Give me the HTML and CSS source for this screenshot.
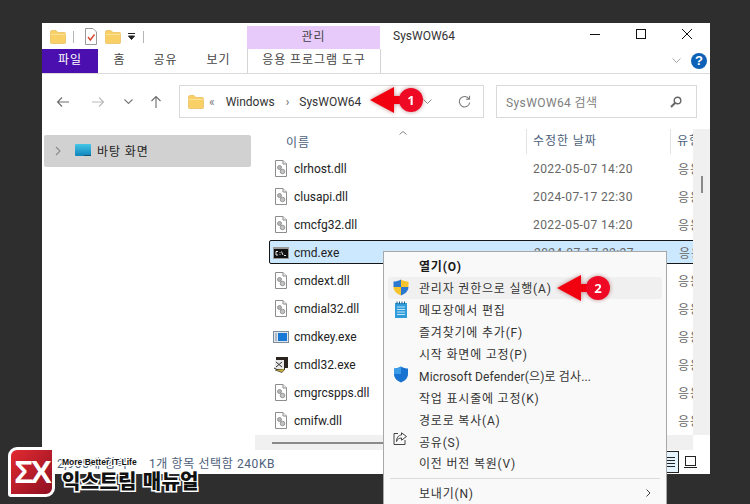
FILE: index.html
```html
<!DOCTYPE html>
<html lang="ko">
<head>
    <meta charset="UTF-8">
    <title>SysWOW64</title>
    <link rel="stylesheet" href="styles.css">
</head>
<body>
    <svg class="defs" width="0" height="0">
        <symbol id="folder" viewBox="0 0 16 14">
            <path d="M0.5 2 Q0.5 0.5 2 0.5 H6 L8 2.5 H14.5 Q15.5 2.5 15.5 3.5 V12.5 Q15.5 13.5 14.5 13.5 H1.5 Q0.5 13.5 0.5 12.5 Z" fill="#f8d066" stroke="#e6b548" stroke-width="0.6"/>
            <path d="M0.5 4.5 H15.5" stroke="#fbe29a" stroke-width="1"/>
        </symbol>
        <symbol id="dll" viewBox="0 0 14 17">
            <path d="M1.5 0.5 H9 L12.5 4 V16.5 H1.5 Z" fill="#fff" stroke="#8d8d8d"/>
            <path d="M9 0.5 V4 H12.5" fill="#eee" stroke="#8d8d8d"/>
            <circle cx="5.5" cy="7.5" r="2" fill="#b5b5b5" stroke="#7d7d7d" stroke-width="0.7"/>
            <circle cx="8.5" cy="11.5" r="2.3" fill="#c2c2c2" stroke="#7d7d7d" stroke-width="0.7"/>
        </symbol>
    </svg>

    <div class="window">
        <div class="titlebar">
            <div class="qat">
                <svg class="qat-folder" width="16" height="14"><use href="#folder"/></svg>
                <span class="qat-sep"></span>
                <svg class="qat-doc" width="12" height="17" viewBox="0 0 12 17">
                    <path d="M0.5 0.5 H8 L11.5 4 V16.5 H0.5 Z" fill="#fff" stroke="#9a9a9a"/>
                    <path d="M3 9 L5.3 12 L9.5 6.5" fill="none" stroke="#d8472b" stroke-width="1.4"/>
                </svg>
                <svg class="qat-folder2" width="16" height="14"><use href="#folder"/></svg>
                <svg class="qat-drop" width="7" height="7" viewBox="0 0 7 7">
                    <path d="M0 0.5 H7 M0.5 3 H6.5 L3.5 6.5 Z" fill="#222" stroke="#222"/>
                </svg>
                <span class="qat-sep qat-sep2"></span>
            </div>
            <div class="context-head">관리</div>
            <div class="win-title">SysWOW64</div>
            <div class="win-buttons">
                <svg width="12" height="12" viewBox="0 0 12 12"><path d="M1 6.5 H11" stroke="#111"/></svg>
                <svg width="12" height="12" viewBox="0 0 12 12"><rect x="1.5" y="1.5" width="9" height="9" fill="none" stroke="#111"/></svg>
                <svg width="12" height="12" viewBox="0 0 12 12"><path d="M1 1 L11 11 M11 1 L1 11" stroke="#111"/></svg>
            </div>
        </div>

        <div class="tabs">
            <div class="tab tab-file">파일</div>
            <div class="tab tab-home">홈</div>
            <div class="tab tab-share">공유</div>
            <div class="tab tab-view">보기</div>
            <div class="tab tab-tool">응용 프로그램 도구</div>
            <div class="tabs-right">
                <svg width="9" height="6" viewBox="0 0 9 6"><path d="M0.5 0.5 L4.5 4.5 L8.5 0.5" fill="none" stroke="#a8a8a8"/></svg>
                <span class="help">?</span>
            </div>
        </div>

        <div class="navbar">
            <div class="nav-buttons">
                <svg width="14" height="12" viewBox="0 0 14 12"><path d="M13 6 H1.5 M6 1.5 L1.5 6 L6 10.5" fill="none" stroke="#6d6d6d" stroke-width="1.1"/></svg>
                <svg class="nav-fwd" width="14" height="12" viewBox="0 0 14 12"><path d="M1 6 H12.5 M8 1.5 L12.5 6 L8 10.5" fill="none" stroke="#b9b9b9" stroke-width="1.1"/></svg>
                <svg class="nav-drop" width="9" height="6" viewBox="0 0 9 6"><path d="M0.5 0.5 L4.5 4.5 L8.5 0.5" fill="none" stroke="#7a7a7a" stroke-width="1.1"/></svg>
                <svg class="nav-up" width="12" height="14" viewBox="0 0 12 14"><path d="M6 13 V1.5 M1.5 6 L6 1.5 L10.5 6" fill="none" stroke="#6d6d6d" stroke-width="1.1"/></svg>
            </div>
            <div class="address">
                <svg width="16" height="14"><use href="#folder"/></svg>
                <span class="crumb-more">«</span>
                <span class="crumb">Windows</span>
                <span class="crumb-sep">›</span>
                <span class="crumb">SysWOW64</span>
                <svg class="addr-drop" width="9" height="6" viewBox="0 0 9 6"><path d="M0.5 0.5 L4.5 4.5 L8.5 0.5" fill="none" stroke="#8a8a8a"/></svg>
                <svg class="addr-refresh" width="13" height="13" viewBox="0 0 13 13"><path d="M11 4 A5.2 5.2 0 1 0 11.7 7.5 M11.5 0.8 V4.3 H8" fill="none" stroke="#7d7d7d" stroke-width="1.1"/></svg>
            </div>
            <div class="search">
                <span>SysWOW64 검색</span>
                <svg width="12" height="12" viewBox="0 0 12 12"><circle cx="7.5" cy="4.5" r="3.3" fill="none" stroke="#666" stroke-width="1.4"/><path d="M5 7 L1 11" stroke="#666" stroke-width="2"/></svg>
            </div>
        </div>

        <div class="main">
            <div class="sidebar">
                <div class="side-item">
                    <svg width="6" height="10" viewBox="0 0 6 10"><path d="M1 1 L5 5 L1 9" fill="none" stroke="#8a8a8a" stroke-width="1.1"/></svg>
                    <svg class="desk-icon" width="16" height="13" viewBox="0 0 16 13">
                        <defs><linearGradient id="desk" x1="0" y1="0" x2="0" y2="1"><stop offset="0" stop-color="#45c6e6"/><stop offset="1" stop-color="#0f83bd"/></linearGradient></defs>
                        <rect width="16" height="12" rx="1" fill="url(#desk)"/>
                        <path d="M9 11.5 H16" stroke="#16516e"/>
                    </svg>
                    <span>바탕 화면</span>
                </div>
            </div>

            <div class="content">
                <div class="content-top">
                    <div class="files">
                        <div class="file-head">
                            <div class="col-name">이름<svg class="sort" width="8" height="4" viewBox="0 0 8 4"><path d="M0.5 3.5 L4 0.5 L7.5 3.5" fill="none" stroke="#888"/></svg></div>
                            <div class="col-date">수정한 날짜</div>
                            <div class="col-type">유형</div>
                        </div>
                        <div class="file-row">
                            <div class="col-name"><svg width="14" height="17"><use href="#dll"/></svg>clrhost.dll</div>
                            <div class="col-date">2022-05-07 14:20</div>
                            <div class="col-type">응용 프로그램 확장</div>
                        </div>
                        <div class="file-row">
                            <div class="col-name"><svg width="14" height="17"><use href="#dll"/></svg>clusapi.dll</div>
                            <div class="col-date">2024-07-17 22:30</div>
                            <div class="col-type">응용 프로그램 확장</div>
                        </div>
                        <div class="file-row">
                            <div class="col-name"><svg width="14" height="17"><use href="#dll"/></svg>cmcfg32.dll</div>
                            <div class="col-date">2022-05-07 14:20</div>
                            <div class="col-type">응용 프로그램 확장</div>
                        </div>
                        <div class="file-row selected">
                            <div class="col-name">
                                <svg class="exe-icon" width="16" height="12" viewBox="0 0 16 12">
                                    <rect width="16" height="12" fill="#9a9a9a"/><rect x="1" y="2" width="14" height="9" fill="#111"/>
                                    <path d="M3 4.5 H5 M3 4.5 V8 H5 M7 5 V5.8 M7 7.2 V8 M8.5 4.5 L10 8 M11 8.5 H13" fill="none" stroke="#fff" stroke-width="0.9"/>
                                </svg>cmd.exe
                            </div>
                            <div class="col-date">2024-07-17 22:27</div>
                            <div class="col-type">응용 프로그램</div>
                        </div>
                        <div class="file-row">
                            <div class="col-name"><svg width="14" height="17"><use href="#dll"/></svg>cmdext.dll</div>
                            <div class="col-date">2022-05-07 14:20</div>
                            <div class="col-type">응용 프로그램 확장</div>
                        </div>
                        <div class="file-row">
                            <div class="col-name"><svg width="14" height="17"><use href="#dll"/></svg>cmdial32.dll</div>
                            <div class="col-date">2022-05-07 14:20</div>
                            <div class="col-type">응용 프로그램 확장</div>
                        </div>
                        <div class="file-row">
                            <div class="col-name">
                                <svg class="exe-icon" width="16" height="12" viewBox="0 0 16 12">
                                    <rect x="0.5" y="0.5" width="15" height="11" fill="#dfe6ee" stroke="#7f8c99"/>
                                    <rect x="5" y="2" width="9" height="8" fill="#1878d6"/>
                                    <path d="M2 3 H4 M2 5 H4 M2 7 H4 M2 9 H4" stroke="#7f8c99"/>
                                </svg>cmdkey.exe
                            </div>
                            <div class="col-date">2022-05-07 14:20</div>
                            <div class="col-type">응용 프로그램</div>
                        </div>
                        <div class="file-row">
                            <div class="col-name">
                                <svg class="exe-icon" width="16" height="16" viewBox="0 0 16 16">
                                    <path d="M3 0 H15 V11 H12 V13 H3 Z" fill="#2a2320"/>
                                    <rect x="2" y="3" width="9" height="9" fill="#e8e8e8"/>
                                    <path d="M3 5 L9 10 M9 5 L3 10 M1 11 L7 14" stroke="#333"/>
                                    <path d="M2 13 L9 15.5 L12 12" fill="#c8b23c" stroke="#333" stroke-width="0.7"/>
                                </svg>cmdl32.exe
                            </div>
                            <div class="col-date">2022-05-07 14:20</div>
                            <div class="col-type">응용 프로그램</div>
                        </div>
                        <div class="file-row">
                            <div class="col-name"><svg width="14" height="17"><use href="#dll"/></svg>cmgrcspps.dll</div>
                            <div class="col-date">2022-05-07 14:20</div>
                            <div class="col-type">응용 프로그램 확장</div>
                        </div>
                        <div class="file-row">
                            <div class="col-name"><svg width="14" height="17"><use href="#dll"/></svg>cmifw.dll</div>
                            <div class="col-date">2022-05-07 14:20</div>
                            <div class="col-type">응용 프로그램 확장</div>
                        </div>
                    </div>
                    <div class="vscroll"><span class="vthumb"></span></div>
                </div>
                <div class="hscroll"><span class="hthumb"></span></div>
            </div>
        </div>

        <div class="statusbar">
            <span class="status-count">2,905개 항목</span>
            <span class="status-sel">1개 항목 선택함 240KB</span>
            <div class="view-btns">
                <span class="view-btn on"><svg width="14" height="12" viewBox="0 0 14 12"><path d="M0 1.5 H14 M0 4.5 H14 M0 7.5 H14 M0 10.5 H14" stroke="#222"/></svg></span>
                <span class="view-btn"><svg width="13" height="12" viewBox="0 0 13 12"><rect x="1.5" y="0.5" width="10" height="9" fill="none" stroke="#222"/><path d="M0 11.5 H13" stroke="#222"/></svg></span>
            </div>
        </div>
    </div>

    <!-- context menu -->
    <div class="menu">
        <div class="menu-item strong">열기(O)</div>
        <div class="menu-item hover">
            <svg class="menu-icon" width="16" height="17" viewBox="0 0 16 17">
                <path d="M8 0.5 C10.5 2 13 2.5 15.5 2.5 V8 H8 Z" fill="#f5c32c"/>
                <path d="M8 0.5 C5.5 2 3 2.5 0.5 2.5 V8 H8 Z" fill="#2a78d0"/>
                <path d="M0.5 8 C0.5 12 4 15 8 16.5 V8 Z" fill="#f5c32c"/>
                <path d="M15.5 8 C15.5 12 12 15 8 16.5 V8 Z" fill="#2a78d0"/>
            </svg>관리자 권한으로 실행(A)
        </div>
        <div class="menu-item">
            <svg class="menu-icon" width="16" height="17" viewBox="0 0 16 17">
                <rect x="2" y="2" width="12" height="15" fill="#2f9bd8"/>
                <path d="M4 0.5 V3 M6.5 0.5 V3 M9 0.5 V3 M11.5 0.5 V3" stroke="#1d5f8c"/>
                <path d="M4 6 H12 M4 8.5 H12 M4 11 H12 M4 13.5 H12" stroke="#bfe6fa"/>
            </svg>메모장에서 편집
        </div>
        <div class="menu-item">즐겨찾기에 추가(F)</div>
        <div class="menu-item">시작 화면에 고정(P)</div>
        <div class="menu-item latin">
            <svg class="menu-icon" width="16" height="17" viewBox="0 0 16 17">
                <path d="M8 0.5 C10.5 2 13 2.5 15 2.5 V8 C15 12 12 15 8 16.5 C4 15 1 12 1 8 V2.5 C3 2.5 5.5 2 8 0.5 Z" fill="#1773cf"/>
                <path d="M8 0.5 C5.5 2 3 2.5 1 2.5 V8 H8 Z" fill="#3a9be8"/>
            </svg>Microsoft Defender(으)로 검사...
        </div>
        <div class="menu-item">작업 표시줄에 고정(K)</div>
        <div class="menu-item">경로로 복사(A)</div>
        <div class="menu-item">
            <svg class="menu-icon" width="14" height="13" viewBox="0 0 14 13">
                <path d="M5 1.5 H1 V12.5 H12 V8" fill="none" stroke="#444"/>
                <path d="M8.5 0.8 L13.5 4.5 L8.5 8.2 V6 C6 6 4.5 7 3.5 9.5 C3.5 6 5.5 3 8.5 3 Z" fill="none" stroke="#444"/>
            </svg>공유(S)
        </div>
        <div class="menu-item">이전 버전 복원(V)</div>
        <div class="menu-line"></div>
        <div class="menu-item">보내기(N)
            <svg class="menu-arrow" width="5" height="8" viewBox="0 0 5 8"><path d="M0.5 0.5 L4 4 L0.5 7.5" fill="none" stroke="#444"/></svg>
        </div>
    </div>

    <!-- red callouts -->
    <div class="callout callout-1"><span class="arrow"></span><span class="shaft"></span><span class="num">1</span></div>
    <div class="callout callout-2"><span class="arrow"></span><span class="shaft"></span><span class="num">2</span></div>

    <!-- watermark logo -->
    <div class="logo">
        <div class="logo-mark">ΣX</div>
        <div class="logo-text">
            <div class="logo-small">More Better IT Life</div>
            <div class="logo-big">익스트림 매뉴얼</div>
        </div>
    </div>
</body>
</html>
```

FILE: styles.css
```css
html, body {
    margin: 0;
    padding: 0;
}
body {
    position: relative;
    width: 750px;
    height: 504px;
    overflow: hidden;
    background: #2e2e2e;
    font-family: Roboto, "Noto Sans CJK KR", sans-serif;
    font-size: 12px;
    color: #333;
}
svg { display: block; flex: none; }
.defs { position: absolute; }

.window {
    display: flex;
    flex-direction: column;
    width: 668px;
    height: 451px;
    margin: 23px 0 0 42px;
    padding-top: 1px;
    box-sizing: border-box;
    background: #fff;
}

/* title bar */
.titlebar {
    display: flex;
    height: 25px;
    flex: none;
}
.qat {
    display: flex;
    align-items: center;
    width: 205px;
    padding-left: 8px;
    box-sizing: border-box;
}
.qat-sep { width: 1px; height: 12px; background: #b5b5b5; margin: 0 11px 0 7px; }
.qat-doc { margin-right: 8px; }
.qat-folder2 { margin-right: 7px; }
.qat-sep2 { margin-left: 8px; }
.context-head {
    width: 133px;
    height: 23px;
    margin-top: 2px;
    background: #e7caf9;
    text-align: center;
    line-height: 23px;
    color: #444;
    letter-spacing: 0.9px;
}
.win-title {
    flex: 1;
    padding: 2px 0 0 13px;
    line-height: 20px;
    color: #333;
}
.win-buttons {
    display: flex;
    gap: 34px;
    padding: 4px 17px 0 0;
}

/* ribbon tabs */
.tabs {
    display: flex;
    height: 24px;
    flex: none;
    border-bottom: 1px solid #dadada;
    line-height: 23px;
}
.tab { text-align: center; color: #444; letter-spacing: 0.9px; }
.tab-file { width: 56px; background: #4a0fae; color: #fff; }
.tab-home { width: 43px; }
.tab-share { width: 49px; }
.tab-view { width: 57px; }
.tab-tool {
    width: 132px;
    border-left: 1px solid #d4d4d4;
    border-right: 1px solid #d4d4d4;
}
.tabs-right {
    display: flex;
    flex: 1;
    align-items: center;
    justify-content: flex-end;
    gap: 10px;
    padding-right: 3px;
}
.help {
    width: 16px;
    height: 16px;
    border-radius: 50%;
    background: #0d62b8;
    color: #fff;
    font: bold 13px/16px "Liberation Sans", sans-serif;
    text-align: center;
}

/* address row */
.navbar {
    display: flex;
    align-items: center;
    height: 55px;
    flex: none;
    padding: 0 13px 0 14px;
    box-sizing: border-box;
}
.nav-buttons {
    display: flex;
    align-items: center;
    width: 123px;
}
.nav-fwd { margin-left: 21px; }
.nav-drop { margin-left: 19px; }
.nav-up { margin-left: 17px; }
.address, .search {
    display: flex;
    align-items: center;
    height: 33px;
    box-sizing: border-box;
    border: 1px solid #d9d9d9;
}
.address {
    width: 305px;
    padding: 0 12px 0 8px;
    color: #333;
}
.crumb-more { margin: 0 11px 0 5px; color: #777; }
.crumb-sep { margin: 0 10px 0 11px; color: #666; }
.addr-drop { margin-left: auto; }
.addr-refresh { margin-left: 26px; }
.search {
    justify-content: space-between;
    width: 201px;
    margin-left: 12px;
    padding: 0 14px 0 9px;
    color: #808080;
    letter-spacing: 0.4px;
}

/* main */
.main {
    display: flex;
    flex: 1;
    min-height: 0;
}
.sidebar {
    width: 213px;
    flex: none;
    padding: 6px 4px 0 2px;
    box-sizing: border-box;
}
.side-item {
    display: flex;
    align-items: center;
    height: 32px;
    padding: 0 0 1px 11px;
    box-sizing: border-box;
    border-radius: 2px;
    background: #d1d1d1;
    color: #222;
    letter-spacing: 0.9px;
}
.desk-icon { margin: 0 6px 0 14px; }

.content {
    display: flex;
    flex-direction: column;
    flex: 1;
    min-width: 0;
}
.content-top {
    display: flex;
    flex: 1;
    min-height: 0;
}
.files {
    flex: 1;
    min-width: 0;
    overflow: hidden;
}
.file-head, .file-row {
    display: grid;
    grid-template-columns: 257px 144px 100px;
    width: 501px;
    margin-left: 14px;
    align-items: center;
    white-space: nowrap;
}
.file-head {
    height: 25px;
    margin-bottom: 2px;
    color: #4c607a;
    letter-spacing: 0.9px;
}
.file-head .col-name { position: relative; padding-left: 17px; }
.sort { position: absolute; left: 130px; top: -2px; }
.file-head .col-date, .file-head .col-type {
    height: 25px;
    line-height: 24px;
    border-left: 1px solid #e3e3e3;
    padding-left: 6px;
}
.file-row {
    height: 24px;
    margin-bottom: 4px;
    padding-top: 1px;
    box-sizing: border-box;
    color: #222;
}
.file-row.selected { padding-top: 1px; }
.file-row .col-date { padding-left: 7px; color: #666; letter-spacing: 0.4px; }
.file-row .col-type { padding-left: 8px; color: #666; letter-spacing: 0.9px; }
.col-name { display: flex; align-items: center; }
.file-row .col-name svg { margin: 0 6px 0 5px; }
.file-row .col-name .exe-icon { margin: 0 5px 0 4px; }
.selected {
    background: #cce8ff;
    border: 1px solid #161616;
    border-radius: 2px;
}
.selected .col-name { margin-left: -1px; }
.vscroll {
    position: relative;
    width: 17px;
    flex: none;
    background: #f0f0f0;
}
.vthumb {
    position: absolute;
    left: 8px;
    top: 47px;
    width: 2px;
    height: 17px;
    background: #8a8a8a;
}
.hscroll {
    position: relative;
    height: 15px;
    margin-right: 17px;
    flex: none;
    background: #f0f0f0;
}
.hthumb {
    position: absolute;
    left: 17px;
    right: 30px;
    top: 7px;
    height: 2px;
    background: #8a8a8a;
}

/* status bar */
.statusbar {
    display: flex;
    align-items: center;
    height: 24px;
    flex: none;
    padding: 0 9px 0 15px;
    box-sizing: border-box;
    color: #4c607a;
    letter-spacing: 0.6px;
}
.status-count { width: 92px; }
.view-btns { display: flex; margin-left: auto; }
.view-btn {
    display: flex;
    align-items: center;
    justify-content: center;
    width: 22px;
    height: 22px;
    box-sizing: border-box;
}
.view-btn.on { background: #e5f3ff; border: 1px solid #222; }

/* context menu */
.menu {
    position: absolute;
    left: 383px;
    top: 251px;
    width: 284px;
    height: 270px;
    padding: 3px 4px 0;
    box-sizing: border-box;
    background: #f9f9f9;
    border: 1px solid #a8a8a8;
    border-bottom: none;
}
.menu-item {
    position: relative;
    display: flex;
    align-items: center;
    height: 21.9px;
    padding-left: 31px;
    color: #333;
    letter-spacing: 0.8px;
}
.menu-item.latin { letter-spacing: 0.15px; }
.menu-item.strong { font-weight: bold; color: #1a1a1a; }
.menu-item.hover { background: #f0f0f0; border-radius: 3px; }
.menu-icon {
    position: absolute;
    left: 5px;
    top: 2px;
}
.menu-line { height: 1px; margin: 4px 2px 3px; background: #dcdcdc; }
.menu-arrow { position: absolute; right: 11px; top: 7px; }

/* callouts */
.callout {
    position: absolute;
    display: flex;
    align-items: center;
    height: 26px;
    filter: drop-shadow(0 0 2px rgba(120, 0, 0, 0.45));
}
.callout-1 { left: 370px; top: 87px; }
.callout-2 { left: 557px; top: 275px; }
.arrow {
    width: 0;
    height: 0;
    border-top: 13px solid transparent;
    border-bottom: 13px solid transparent;
    border-right: 24px solid #f10010;
}
.shaft {
    width: 7px;
    height: 8px;
    background: #f10010;
}
.num {
    width: 24px;
    height: 24px;
    margin-left: -2px;
    border-radius: 50%;
    background: #ee0a24;
    color: #fff;
    font: bold 13px/24px "Open Sans", sans-serif;
    text-align: center;
}

/* logo */
.logo {
    position: absolute;
    left: 8px;
    top: 447px;
    display: flex;
    gap: 7px;
}
.logo-mark {
    width: 41px;
    height: 44px;
    border: 3px solid #fff;
    border-radius: 9px 3px 9px 3px;
    background: linear-gradient(135deg, #e22a30, #8e1022);
    color: #fff;
    font: bold 32px/44px "Liberation Sans", sans-serif;
    letter-spacing: -3px;
    text-align: center;
}
.logo-text { padding-top: 9px; color: #111; }
.logo-small {
    font: bold 8.5px/13px "Liberation Sans", sans-serif;
    -webkit-text-stroke: 2px #fff;
    paint-order: stroke fill;
}
.logo-big {
    font: 900 20px/24px "Noto Sans CJK KR", sans-serif;
    letter-spacing: 0.3px;
    -webkit-text-stroke: 3px #fff;
    paint-order: stroke fill;
}
```
